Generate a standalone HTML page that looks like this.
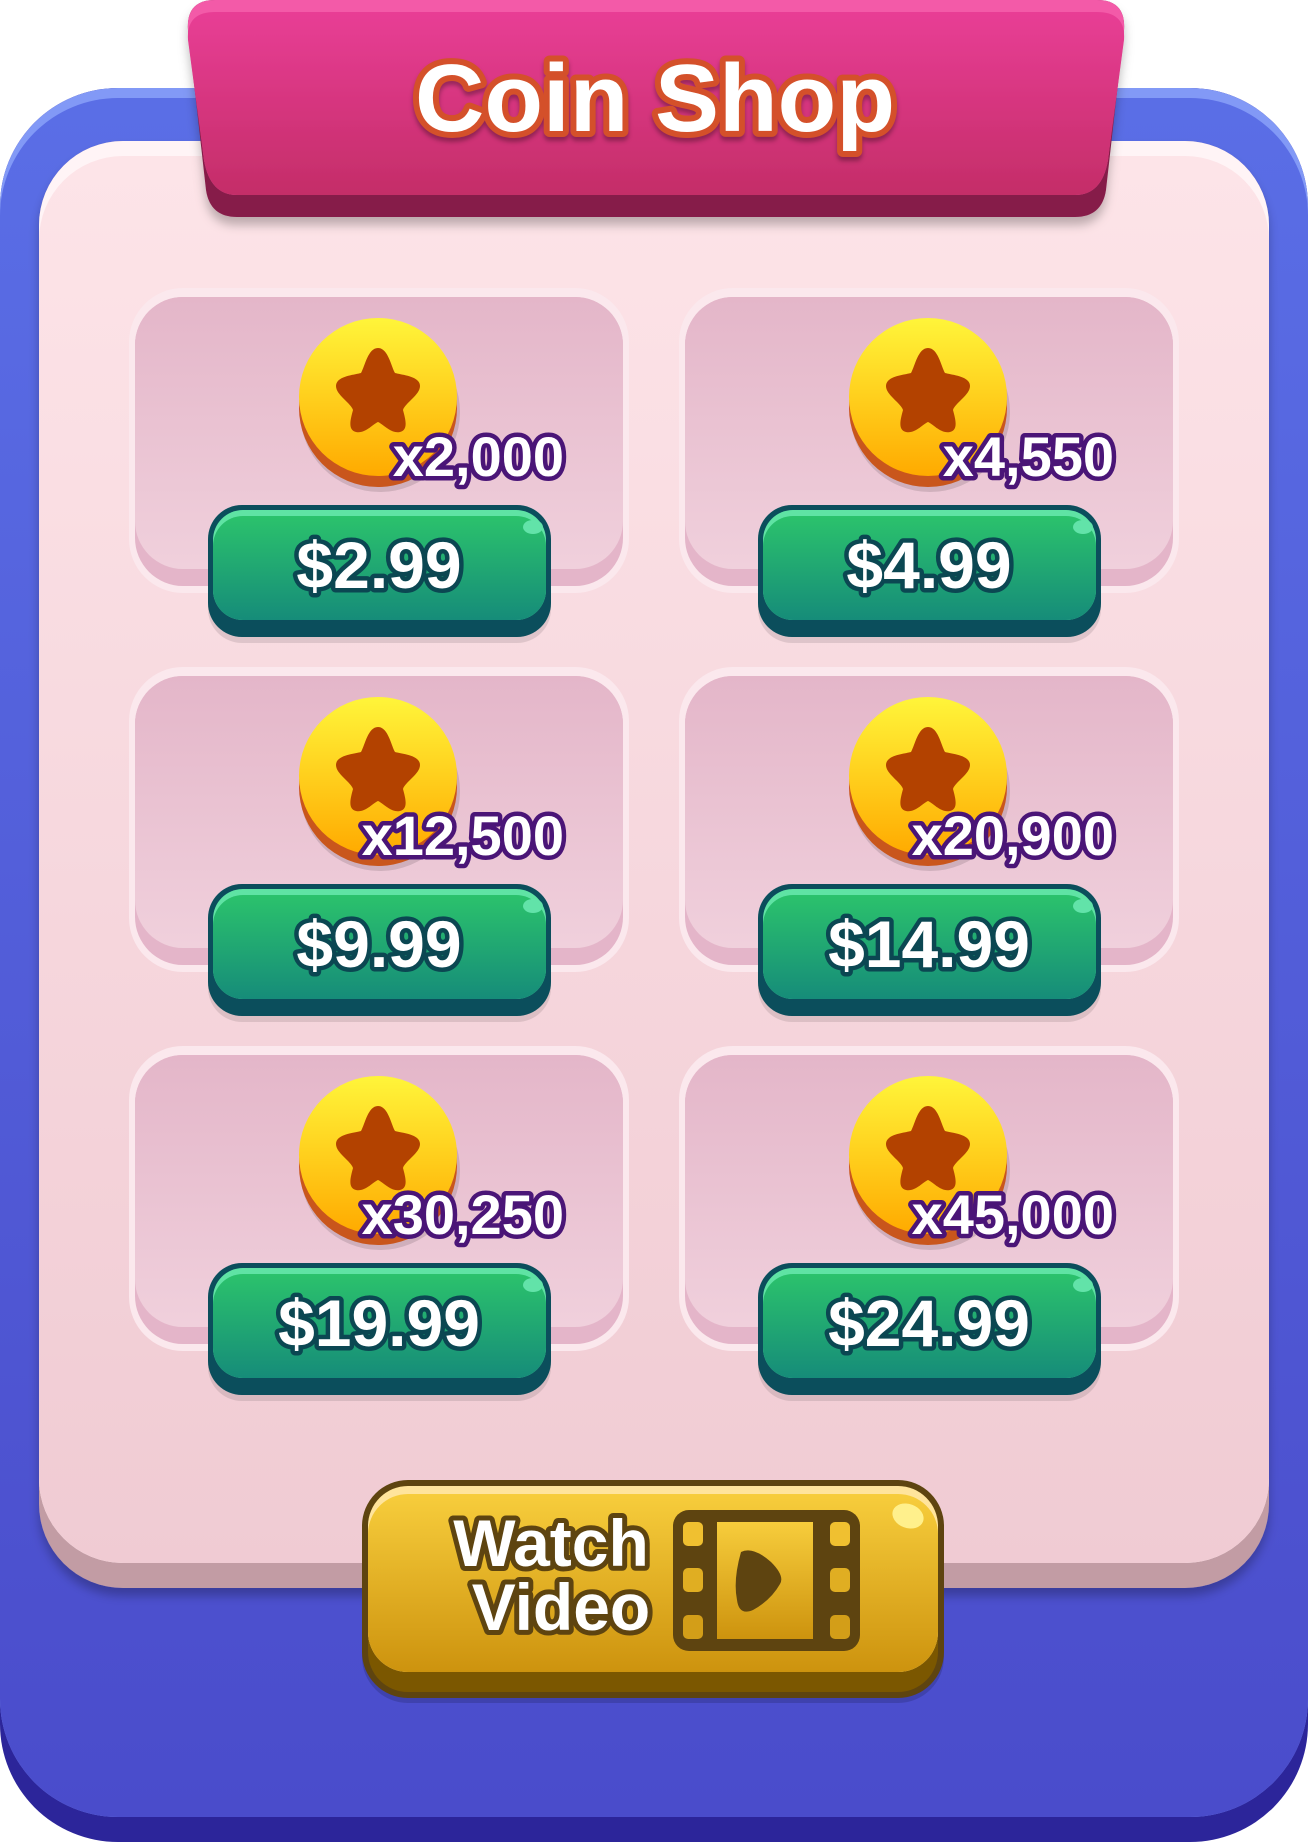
<!DOCTYPE html>
<html><head><meta charset="utf-8"><style>
html,body{margin:0;padding:0;background:#fff;}
svg{display:block;}
text{font-family:"Liberation Sans","DejaVu Sans",sans-serif;font-weight:bold;paint-order:stroke fill;stroke-linejoin:round;}
</style></head><body>
<svg width="1308" height="1842" viewBox="0 0 1308 1842" xmlns="http://www.w3.org/2000/svg">
<defs>
<linearGradient id="blue" x1="0" y1="0" x2="0" y2="1"><stop offset="0" stop-color="#5a6ee6"/><stop offset="1" stop-color="#4a4ccb"/></linearGradient>
<linearGradient id="pink" x1="0" y1="0" x2="0" y2="1"><stop offset="0" stop-color="#fde4e8"/><stop offset="1" stop-color="#f0cbd3"/></linearGradient>
<linearGradient id="ban" x1="0" y1="0" x2="0" y2="1"><stop offset="0" stop-color="#e83e95"/><stop offset="1" stop-color="#c42d68"/></linearGradient>
<linearGradient id="card" x1="0" y1="0" x2="0" y2="1"><stop offset="0" stop-color="#e4b6c9"/><stop offset="1" stop-color="#f0d0dc"/></linearGradient>
<linearGradient id="coin" x1="0" y1="0" x2="0" y2="1"><stop offset="0" stop-color="#fff53a"/><stop offset="1" stop-color="#ffaa00"/></linearGradient>
<linearGradient id="grn" x1="0" y1="0" x2="0" y2="1"><stop offset="0" stop-color="#2bc26c"/><stop offset="1" stop-color="#168c79"/></linearGradient>
<linearGradient id="gold" x1="0" y1="0" x2="0" y2="1"><stop offset="0" stop-color="#f7cd3c"/><stop offset="1" stop-color="#cd930e"/></linearGradient>
<filter id="sh" x="-10%" y="-10%" width="120%" height="130%"><feDropShadow dx="0" dy="8" stdDeviation="5" flood-color="#000" flood-opacity="0.25"/></filter>
<g id="star"><path d="M0,-40 C10,-40 13,-22 17,-15 C24,-13 42,-12 42,-2 C42,7 27,15 25,22 C27,30 31,42 22,44 C13,46 5,36 0,34 C-5,36 -13,46 -22,44 C-31,42 -27,30 -25,22 C-27,15 -42,7 -42,-2 C-42,-12 -24,-13 -17,-15 C-13,-22 -10,-40 0,-40Z" fill="#b34200"/></g>
</defs>

<rect x="0" y="88" width="1308" height="1754" rx="118" fill="#2c259a"/>
<rect x="0" y="88" width="1308" height="1729" rx="118" fill="#8299f6"/>
<rect x="0" y="98" width="1308" height="1719" rx="118" fill="url(#blue)"/>

<rect x="39" y="141" width="1230" height="1447" rx="84" fill="#c29ca4" filter="url(#sh)"/>
<rect x="39" y="141" width="1230" height="1422" rx="84" fill="#fff4f6"/>
<rect x="39" y="156" width="1230" height="1407" rx="84" fill="url(#pink)"/>

<g filter="url(#sh)">
<path d="M215,0 L1097,0 Q1126,0 1124,30 L1106,190 Q1102,217 1075,217 L237,217 Q210,217 206,190 L188,30 Q186,0 215,0Z" fill="#861f4a"/>
<path d="M215,0 L1097,0 Q1126,0 1124,30 L1108,160 Q1102,195 1075,195 L237,195 Q210,195 204,160 L188,30 Q186,0 215,0Z" fill="#f35aa8"/>
<path d="M215,12 L1097,12 Q1126,12 1124,40 L1108,160 Q1102,195 1075,195 L237,195 Q210,195 204,160 L188,40 Q186,12 215,12Z" fill="url(#ban)"/>
</g>
<text x="655" y="131" font-size="96" text-anchor="middle" fill="#fff" stroke="#d4502a" stroke-width="12" style="filter:drop-shadow(0 4px 2px rgba(0,0,0,.3))">Coin Shop</text>

<g id="c1" transform="translate(129,288)">
<rect x="0" y="0" width="500" height="305" rx="54" fill="#fbe8ed"/>
<rect x="6" y="9" width="488" height="289" rx="48" fill="#e4b5c9"/>
<rect x="6" y="9" width="488" height="272" rx="48" fill="url(#card)"/>
<ellipse cx="251" cy="124" rx="80" ry="80" fill="#000" opacity="0.12"/>
<circle cx="249" cy="120" r="79" fill="#c9561c"/>
<circle cx="249" cy="109" r="79" fill="url(#coin)"/>
<use href="#star" x="249" y="100"/>
</g>
<use href="#c1" x="550" y="0"/>
<use href="#c1" x="0" y="379"/>
<use href="#c1" x="550" y="379"/>
<use href="#c1" x="0" y="758"/>
<use href="#c1" x="550" y="758"/>

<g id="b1" transform="translate(208,505)">
<rect x="0" y="0" width="343" height="134" rx="34" fill="#000" opacity="0.1" transform="translate(0,4)"/>
<rect x="0" y="0" width="343" height="132" rx="34" fill="#0b4e5c"/>
<rect x="5" y="5" width="333" height="110" rx="30" fill="#5fe3a4"/>
<rect x="5" y="11" width="333" height="104" rx="30" fill="url(#grn)"/>
<ellipse cx="325" cy="22" rx="10" ry="7" fill="#62e3a9"/>
</g>
<use href="#b1" x="550" y="0"/>
<use href="#b1" x="0" y="379"/>
<use href="#b1" x="550" y="379"/>
<use href="#b1" x="0" y="758"/>
<use href="#b1" x="550" y="758"/>

<g font-size="56" text-anchor="end" fill="#fff" stroke="#4a1577" stroke-width="9">
<text x="564" y="476">x2,000</text>
<text x="1114" y="476">x4,550</text>
<text x="564" y="855">x12,500</text>
<text x="1114" y="855">x20,900</text>
<text x="564" y="1234">x30,250</text>
<text x="1114" y="1234">x45,000</text>
</g>
<g font-size="66" text-anchor="middle" fill="#fff" stroke="#0b4752" stroke-width="9">
<text x="379" y="588">$2.99</text>
<text x="929" y="588">$4.99</text>
<text x="379" y="967">$9.99</text>
<text x="929" y="967">$14.99</text>
<text x="379" y="1346">$19.99</text>
<text x="929" y="1346">$24.99</text>
</g>

<g transform="translate(362,1480)">
<rect x="0" y="5" width="582" height="218" rx="46" fill="#000" opacity="0.15"/>
<rect x="0" y="0" width="582" height="218" rx="46" fill="#5e4410"/>
<rect x="6" y="6" width="570" height="206" rx="40" fill="#7b5700"/>
<rect x="6" y="6" width="570" height="186" rx="40" fill="#ffe49c"/>
<rect x="6" y="14" width="570" height="178" rx="40" fill="url(#gold)"/>
<ellipse cx="546" cy="36" rx="16" ry="12" fill="#fff08c" transform="rotate(20 546 36)"/>
<g font-size="66" text-anchor="middle" fill="#fff" stroke="#5e4410" stroke-width="10">
<text x="189" y="86">Watch</text>
<text x="199" y="150">Video</text>
</g>
<g transform="translate(311,30)">
<rect x="0" y="0" width="187" height="141" rx="16" fill="#5e4410"/>
<rect x="44" y="12" width="96" height="117" fill="url(#gold)"/>
<rect x="10" y="12" width="20" height="24" rx="5" fill="#f0c030"/>
<rect x="10" y="58" width="20" height="24" rx="5" fill="#e0ae22"/>
<rect x="10" y="105" width="20" height="24" rx="5" fill="#d39e18"/>
<rect x="157" y="12" width="20" height="24" rx="5" fill="#f0c030"/>
<rect x="157" y="58" width="20" height="24" rx="5" fill="#e0ae22"/>
<rect x="157" y="105" width="20" height="24" rx="5" fill="#d39e18"/>
<path d="M68,42 Q80,36 98,52 Q112,66 107,74 Q98,90 80,100 Q66,106 64,90 Q60,70 68,42Z" fill="#5e4410"/>
</g>
</g>
</svg>
</body></html>
